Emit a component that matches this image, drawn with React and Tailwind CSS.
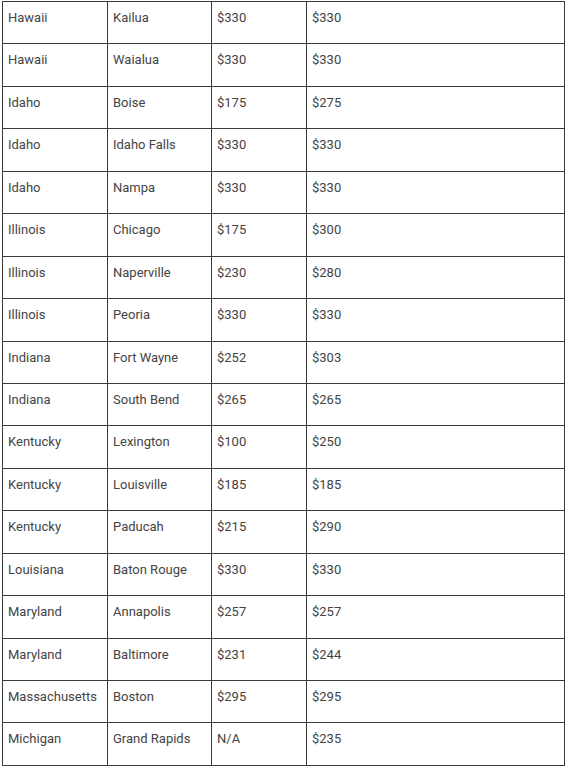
const rows = [
    ['Hawaii', 'Kailua', '$330', '$330'],
    ['Hawaii', 'Waialua', '$330', '$330'],
    ['Idaho', 'Boise', '$175', '$275'],
    ['Idaho', 'Idaho Falls', '$330', '$330'],
    ['Idaho', 'Nampa', '$330', '$330'],
    ['Illinois', 'Chicago', '$175', '$300'],
    ['Illinois', 'Naperville', '$230', '$280'],
    ['Illinois', 'Peoria', '$330', '$330'],
    ['Indiana', 'Fort Wayne', '$252', '$303'],
    ['Indiana', 'South Bend', '$265', '$265'],
    ['Kentucky', 'Lexington', '$100', '$250'],
    ['Kentucky', 'Louisville', '$185', '$185'],
    ['Kentucky', 'Paducah', '$215', '$290'],
    ['Louisiana', 'Baton Rouge', '$330', '$330'],
    ['Maryland', 'Annapolis', '$257', '$257'],
    ['Maryland', 'Baltimore', '$231', '$244'],
    ['Massachusetts', 'Boston', '$295', '$295'],
    ['Michigan', 'Grand Rapids', 'N/A', '$235'],
];

// column widths measured from the screenshot
const widths = ['w-[105px]', 'w-[104px]', 'w-[95px]', 'w-[258px]'];

export default function App() {
    return (
        <div className="bg-white min-h-[768px] pt-[1px] pl-[2px] font-['Roboto',sans-serif] text-[13px] text-[#444]">
            <div className="w-[563px] border-l border-t border-[#3a3a3a]">
                {rows.map((row, i) => (
                    <div key={i} className="flex h-[42.44px]">
                        {row.map((cell, j) => (
                            <div
                                key={j}
                                className={`${widths[j]} shrink-0 border-r border-b border-[#3a3a3a] pl-[5px] pt-[6px] leading-[20px]`}
                            >
                                {cell}
                            </div>
                        ))}
                    </div>
                ))}
            </div>
        </div>
    );
}
